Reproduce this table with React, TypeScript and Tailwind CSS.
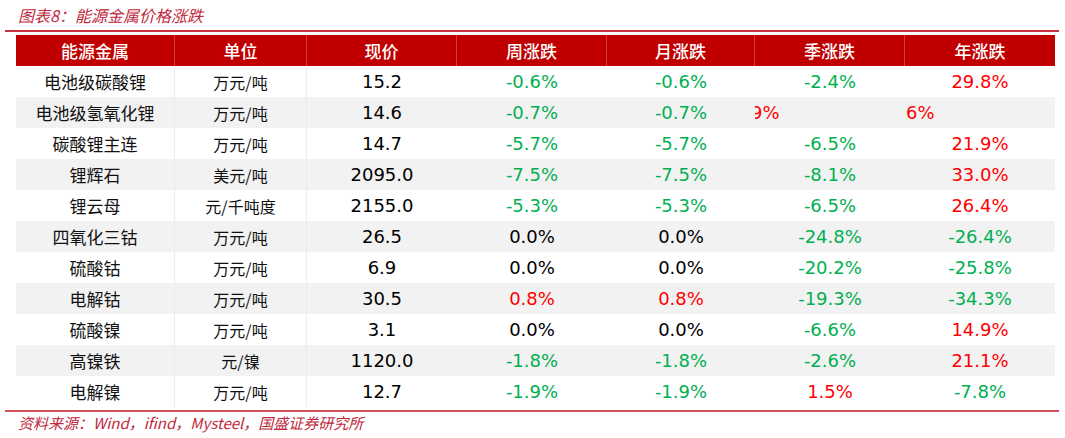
import React from "react";

type Tone = "g" | "r" | "k";

interface Row {
  name: string;
  unit: string;
  price: string;
  week: [string, Tone];
  month: [string, Tone];
  season: [string, Tone];
  year: [string, Tone];
}

const ROWS: Row[] = [
  { name: "电池级碳酸锂", unit: "万元/吨", price: "15.2", week: ["-0.6%", "g"], month: ["-0.6%", "g"], season: ["-2.4%", "g"], year: ["29.8%", "r"] },
  { name: "电池级氢氧化锂", unit: "万元/吨", price: "14.6", week: ["-0.7%", "g"], month: ["-0.7%", "g"], season: ["", "r"], year: ["", "r"] },
  { name: "碳酸锂主连", unit: "万元/吨", price: "14.7", week: ["-5.7%", "g"], month: ["-5.7%", "g"], season: ["-6.5%", "g"], year: ["21.9%", "r"] },
  { name: "锂辉石", unit: "美元/吨", price: "2095.0", week: ["-7.5%", "g"], month: ["-7.5%", "g"], season: ["-8.1%", "g"], year: ["33.0%", "r"] },
  { name: "锂云母", unit: "元/千吨度", price: "2155.0", week: ["-5.3%", "g"], month: ["-5.3%", "g"], season: ["-6.5%", "g"], year: ["26.4%", "r"] },
  { name: "四氧化三钴", unit: "万元/吨", price: "26.5", week: ["0.0%", "k"], month: ["0.0%", "k"], season: ["-24.8%", "g"], year: ["-26.4%", "g"] },
  { name: "硫酸钴", unit: "万元/吨", price: "6.9", week: ["0.0%", "k"], month: ["0.0%", "k"], season: ["-20.2%", "g"], year: ["-25.8%", "g"] },
  { name: "电解钴", unit: "万元/吨", price: "30.5", week: ["0.8%", "r"], month: ["0.8%", "r"], season: ["-19.3%", "g"], year: ["-34.3%", "g"] },
  { name: "硫酸镍", unit: "万元/吨", price: "3.1", week: ["0.0%", "k"], month: ["0.0%", "k"], season: ["-6.6%", "g"], year: ["14.9%", "r"] },
  { name: "高镍铁", unit: "元/镍", price: "1120.0", week: ["-1.8%", "g"], month: ["-1.8%", "g"], season: ["-2.6%", "g"], year: ["21.1%", "r"] },
  { name: "电解镍", unit: "万元/吨", price: "12.7", week: ["-1.9%", "g"], month: ["-1.9%", "g"], season: ["1.5%", "r"], year: ["-7.8%", "g"] },
];

const HEAD = ["能源金属", "单位", "现价", "周涨跌", "月涨跌", "季涨跌", "年涨跌"];
const WIDTHS = ["w-[159px]", "w-[132px]", "w-[150px]", "w-[150px]", "w-[148px]", "w-[150px]", "w-[150px]"];

const CJK = "font-['Noto_Sans_CJK_SC','Noto_Sans',sans-serif]";
const NUM = "font-['DejaVu_Sans','Noto_Sans_CJK_SC',sans-serif] text-[18px]";

function toneClass(t: Tone) {
  if (t === "g") return "text-[#00b050]";
  if (t === "r") return "text-[#ff0000]";
  return "text-black";
}

export default function App() {
  return (
    <div className="w-[1065px] h-[438px] bg-white overflow-hidden">
      {/* title */}
      <div className={`h-[30px] pl-[18px] pt-[5px] text-[16px] leading-[20px] italic text-[#c0283c] ${CJK}`}>
        图表8：能源金属价格涨跌
      </div>
      <div className="ml-[5px] w-[1054px] h-[2px] bg-[#c8303f]" />

      <div className="ml-[16px] mt-[3px] w-[1039px]">
        {/* header */}
        <div className={`flex h-[31px] bg-[#c00000] text-white text-[17px] font-medium ${CJK}`}>
          {HEAD.map((h, i) => (
            <div
              key={h}
              className={`${WIDTHS[i]} flex items-center justify-center ${i < 6 ? "border-r border-[#d43c3c]" : ""}`}
            >
              {h}
            </div>
          ))}
        </div>

        {/* body */}
        {ROWS.map((r, idx) => (
          <div key={r.name} className={`flex h-[31px] ${idx % 2 === 1 ? "bg-[#f2f2f2]" : "bg-white"}`}>
            <div className={`w-[159px] flex items-center justify-center text-[17px] text-[#111] border-r border-[#ececec] ${CJK}`}>
              {r.name}
            </div>
            <div className={`w-[132px] flex items-center justify-center text-[16px] text-[#111] border-r border-[#ececec] ${CJK}`}>
              {r.unit}
            </div>
            <div className={`w-[150px] flex items-center justify-center text-black ${NUM}`}>{r.price}</div>
            <div className={`w-[150px] flex items-center justify-center ${NUM} ${toneClass(r.week[1])}`}>{r.week[0]}</div>
            <div className={`w-[148px] flex items-center justify-center ${NUM} ${toneClass(r.month[1])}`}>{r.month[0]}</div>
            {idx === 1 ? (
              <>
                {/* clipped cells, as in the source image */}
                <div className={`w-[150px] flex items-center overflow-hidden text-[#ff0000] ${NUM}`}>
                  <span className="-ml-[4px]">9%</span>
                </div>
                <div className={`w-[150px] flex items-center overflow-hidden text-[#ff0000] ${NUM}`}>
                  <span className="ml-[1px]">6%</span>
                </div>
              </>
            ) : (
              <>
                <div className={`w-[150px] flex items-center justify-center ${NUM} ${toneClass(r.season[1])}`}>{r.season[0]}</div>
                <div className={`w-[150px] flex items-center justify-center ${NUM} ${toneClass(r.year[1])}`}>{r.year[0]}</div>
              </>
            )}
          </div>
        ))}
      </div>

      <div className="ml-[5px] mt-[3px] w-[1054px] h-[2px] bg-[#d0505c]" />
      {/* source */}
      <div className={`pl-[18px] pt-[1px] text-[15px] leading-[20px] italic text-[#c0283c] ${CJK}`}>
        资料来源：Wind，ifind，Mysteel，国盛证券研究所
      </div>
    </div>
  );
}
